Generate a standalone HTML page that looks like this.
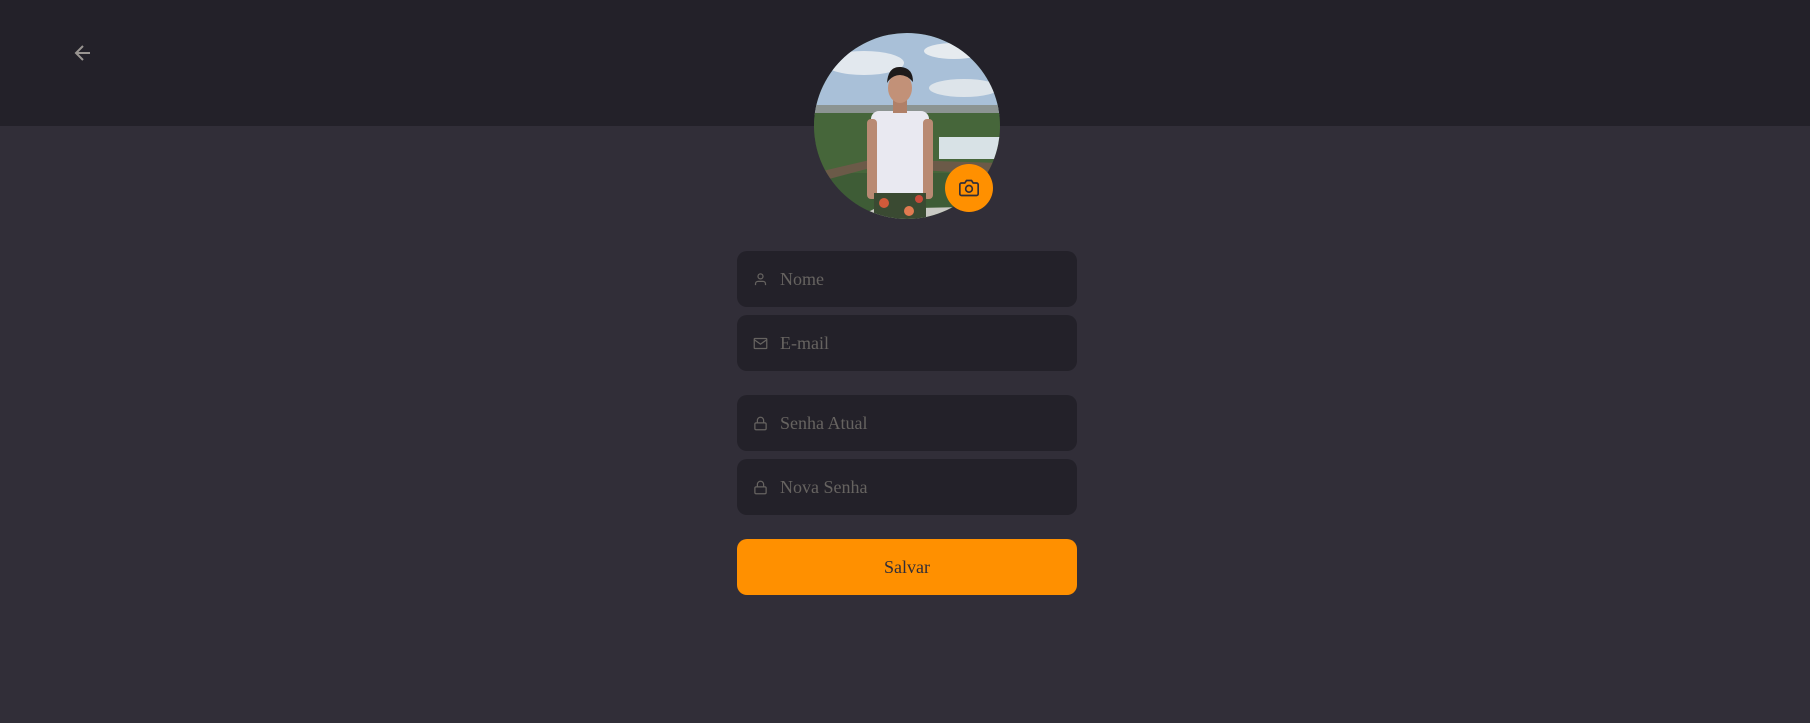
<!DOCTYPE html>
<html><head><meta charset="utf-8"><style>
*{margin:0;padding:0;box-sizing:border-box}
html,body{width:1810px;height:723px;overflow:hidden;background:#312e38;font-family:"Liberation Serif","DejaVu Serif",serif}
.header{position:absolute;left:0;top:0;width:1810px;height:126px;background:#232129}
.back{position:absolute;left:73px;top:43px}
.avatar{position:absolute;left:814px;top:33px;width:186px;height:186px;border-radius:50%;overflow:hidden;background:#3e5c36}
.cam{position:absolute;left:945px;top:164px;width:48px;height:48px;border-radius:50%;background:#ff9000;display:flex;align-items:center;justify-content:center}
.field{position:absolute;left:737px;width:340px;height:56px;border-radius:10px;background:#232129;color:#666360;font-size:18px;display:flex;align-items:center}
.field svg{position:absolute;left:16px}
.field span{position:absolute;left:43px}
.btn{position:absolute;left:737px;top:539px;width:340px;height:56px;border-radius:10px;background:#ff9000;color:#312e38;font-size:18px;display:flex;align-items:center;justify-content:center}
</style></head><body>
<div class="header"></div>
<svg class="back" width="20" height="20" viewBox="0 0 20 20" fill="none" stroke="#999591" stroke-width="2"><path d="M17 10H3M10 3L3 10L10 17"/></svg>
<div class="avatar">
<svg width="186" height="186" viewBox="0 0 186 186">
<rect x="0" y="0" width="186" height="80" fill="#a9c0d8"/>
<ellipse cx="50" cy="30" rx="40" ry="12" fill="#e2e8ee"/>
<ellipse cx="140" cy="18" rx="30" ry="8" fill="#e6ebef"/>
<ellipse cx="150" cy="55" rx="35" ry="9" fill="#dde4ea"/>
<rect x="0" y="72" width="186" height="10" fill="#8c9492"/>
<rect x="0" y="80" width="186" height="60" fill="#46663a"/>
<rect x="125" y="104" width="61" height="22" fill="#d8e2e6"/>
<path d="M0 140 L60 126 L186 130 L186 142 L60 134 L0 150Z" fill="#6b5a48"/>
<rect x="0" y="146" width="186" height="40" fill="#3e5c36"/>
<path d="M40 186 L60 176 L150 174 L170 186Z" fill="#c9c9c4"/>
<rect x="57" y="78" width="58" height="85" rx="8" fill="#e9e9f1"/>
<rect x="53" y="86" width="10" height="80" rx="4" fill="#b98a73"/>
<rect x="109" y="86" width="10" height="80" rx="4" fill="#b98a73"/>
<rect x="60" y="160" width="52" height="30" fill="#3a4a32"/>
<circle cx="70" cy="170" r="5" fill="#d05a3a"/><circle cx="95" cy="178" r="5" fill="#e07a50"/><circle cx="105" cy="166" r="4" fill="#c84a3a"/>
<rect x="79" y="66" width="14" height="14" fill="#b08068"/>
<ellipse cx="86" cy="55" rx="12" ry="15" fill="#c29178"/>
<path d="M73 50 Q74 33 87 34 Q99 35 99 49 Q93 42 86 42 Q78 42 73 50Z" fill="#1e1a1a"/>
</svg>
</div>
<div class="cam"><svg width="20" height="20" viewBox="0 0 24 24" fill="none" stroke="#312e38" stroke-width="2" stroke-linejoin="round"><path d="M23 19a2 2 0 0 1-2 2H3a2 2 0 0 1-2-2V8a2 2 0 0 1 2-2h4l2-3h6l2 3h4a2 2 0 0 1 2 2z"/><circle cx="12" cy="13" r="4"/></svg></div>

<div class="field" style="top:251px"><svg width="15" height="15" viewBox="0 0 24 24" fill="none" stroke="#666360" stroke-width="2"><path d="M20 21v-2a4 4 0 0 0-4-4H8a4 4 0 0 0-4 4v2"/><circle cx="12" cy="7" r="4"/></svg><span>Nome</span></div>
<div class="field" style="top:315px"><svg width="15" height="15" viewBox="0 0 24 24" fill="none" stroke="#666360" stroke-width="2"><rect x="2" y="4" width="20" height="16" rx="1"/><path d="M2 6l10 7 10-7"/></svg><span>E-mail</span></div>
<div class="field" style="top:395px"><svg width="15" height="15" viewBox="0 0 24 24" fill="none" stroke="#666360" stroke-width="2"><rect x="3" y="11" width="18" height="11" rx="2"/><path d="M7 11V7a5 5 0 0 1 10 0v4"/></svg><span>Senha Atual</span></div>
<div class="field" style="top:459px"><svg width="15" height="15" viewBox="0 0 24 24" fill="none" stroke="#666360" stroke-width="2"><rect x="3" y="11" width="18" height="11" rx="2"/><path d="M7 11V7a5 5 0 0 1 10 0v4"/></svg><span>Nova Senha</span></div>
<div class="btn">Salvar</div>
</body></html>
